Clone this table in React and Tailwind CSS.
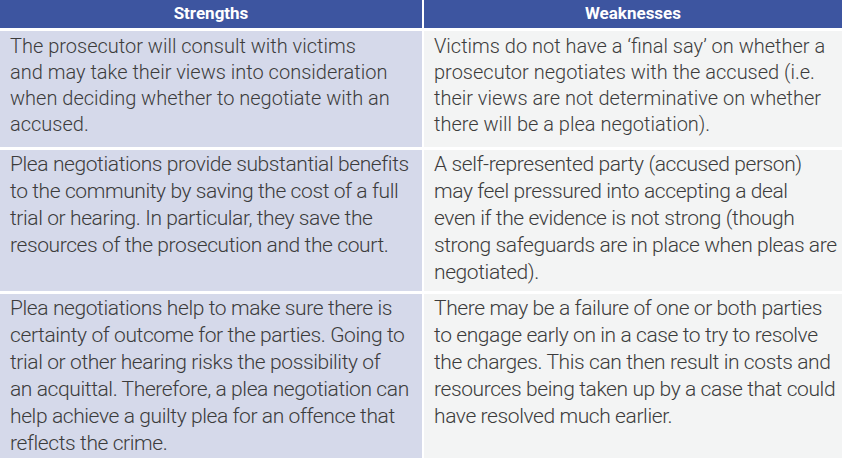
import React from "react";

const rows = [
  {
    l: ["The prosecutor will consult with victims", "and may take their views into consideration", "when deciding whether to negotiate with an", "accused."],
    r: ["Victims do not have a \u2018final say\u2019 on whether a", "prosecutor negotiates with the accused (i.e.", "their views are not determinative on whether", "there will be a plea negotiation)."],
    h: "h-[116px]",
    cond: false,
  },
  {
    l: ["Plea negotiations provide substantial benefits", "to the community by saving the cost of a full", "trial or hearing. In particular, they save the", "resources of the prosecution and the court."],
    r: ["A self-represented party (accused person)", "may feel pressured into accepting a deal", "even if the evidence is not strong (though", "strong safeguards are in place when pleas are", "negotiated)."],
    h: "h-[141px]",
    cond: true,
  },
  {
    l: ["Plea negotiations help to make sure there is", "certainty of outcome for the parties. Going to", "trial or other hearing risks the possibility of", "an acquittal. Therefore, a plea negotiation can", "help achieve a guilty plea for an offence that", "reflects the crime."],
    r: ["There may be a failure of one or both parties", "to engage early on in a case to try to resolve", "the charges. This can then result in costs and", "resources being taken up by a case that could", "have resolved much earlier."],
    h: "flex-1",
    cond: true,
  },
];

function Cell({ lines, bg, cond }) {
  return (
    <div
      className={`${bg} px-[10px] text-[#3c3c3c] ${cond ? "pt-[1px] text-[21px] leading-[27px] tracking-[-0.4px]" : "pt-[2px] text-[20px] leading-[26px] tracking-[0px]"}`}
      style={{ fontFamily: '"Roboto", "Liberation Sans", sans-serif', fontWeight: 300 }}
    >
      {lines.map((t, i) => (
        <div key={i} className="whitespace-nowrap">{t}</div>
      ))}
    </div>
  );
}

export default function App() {
  return (
    <div className="w-[842px] h-[458px] bg-white flex flex-col gap-[3px] overflow-hidden">
      <div className="h-[28px] grid grid-cols-[422px_1fr] gap-x-[2px]">
        <div className="bg-[#3d55a0] flex items-center justify-center text-white text-[17px] font-bold" style={{ fontFamily: '"Roboto", sans-serif' }}>Strengths</div>
        <div className="bg-[#3d55a0] flex items-center justify-center text-white text-[17px] font-bold" style={{ fontFamily: '"Roboto", sans-serif' }}>Weaknesses</div>
      </div>
      {rows.map((r, i) => (
        <div key={i} className={`${r.h} grid grid-cols-[422px_1fr] gap-x-[2px]`}>
          <Cell lines={r.l} bg="bg-[#d5d9ea]" cond={r.cond} />
          <Cell lines={r.r} bg="bg-[#f3f4f4]" cond={r.cond} />
        </div>
      ))}
    </div>
  );
}
